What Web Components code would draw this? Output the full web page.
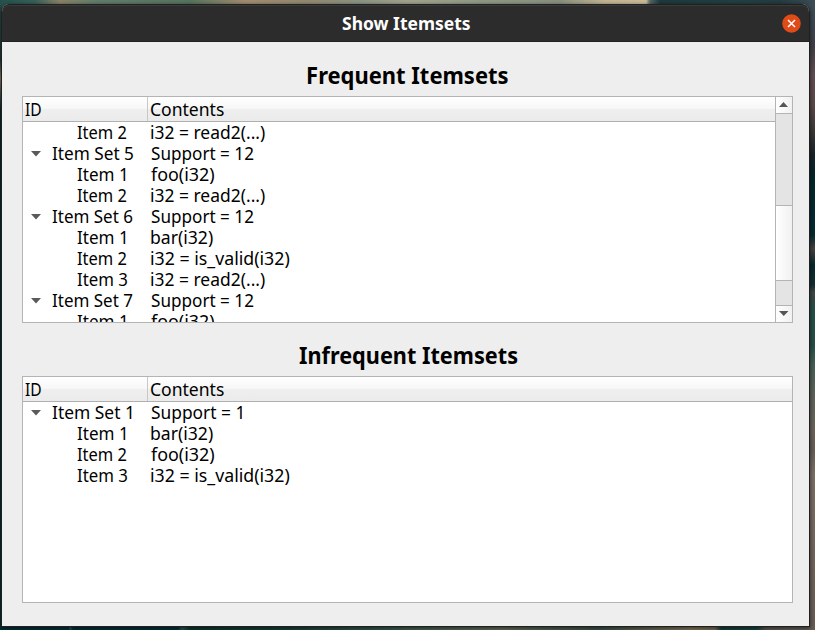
<!DOCTYPE html>
<html lang="en"><head><meta charset="utf-8"><title>Show Itemsets</title>
<style>
html,body{margin:0;width:815px;height:630px;overflow:hidden}
body{font-family:"Noto Sans",sans-serif;color:#000}
</style></head><body>
<desk-top>
<dialog-window>
<item-tree heading="Frequent Itemsets" hw="200" scroll id="f"></item-tree>
<item-tree heading="Infrequent Itemsets" hw="218.5" id="i"></item-tree>
</dialog-window>
</desk-top>
<script>
// Text line fitted to a given ink width.
class FitText extends HTMLElement{
  connectedCallback(){
    const bold=this.hasAttribute('bold'), size=+(this.getAttribute('size')||17.4), w=+this.getAttribute('w');
    const c=document.createElement('canvas').getContext('2d');
    c.font=(bold?'700 ':'400 ')+size+'px "Noto Sans", sans-serif';
    const m=c.measureText(this.textContent);
    const ink=m.actualBoundingBoxRight+m.actualBoundingBoxLeft, s=w/ink;
    const r=this.attachShadow({mode:'open'});
    r.innerHTML=`<style>:host{display:block;width:${w}px;height:21px;white-space:pre;font:${bold?700:400} ${size}px/21px "Noto Sans",sans-serif}
    span{display:block;width:max-content;transform-origin:0 0;transform:translateX(${m.actualBoundingBoxLeft*s}px) scaleX(${s})}</style><span><slot></slot></span>`;
  }
}
customElements.define('fit-text',FitText);

class DeskTop extends HTMLElement{
  constructor(){super();this.attachShadow({mode:'open'}).innerHTML=`<style>
  :host{display:grid;box-sizing:border-box;width:815px;height:630px;padding:4px 5px 3px 1px;background:
   linear-gradient(90deg,#25514d 0,#35605a 35px,#8b8268 60px,#637d6b 95px,#56735f 190px,#a18c70 245px,#928a72 310px,#8b9584 360px,#a3a48f 410px,#8f9a86 480px,#8a9080 560px,#c3b593 605px,#cbbd99 646px,#566866 650px,#1d393d 660px,#223f43 745px,#253b42 780px,#3c4d55 815px) 0 0/815px 5px no-repeat,
   linear-gradient(90deg,#002f35 0,#003238 69px,#2a555a 70px,#002f34 73px,#003238 178px,#2c5350 182px,#08382f 190px,#183f38 290px,#3e5b4e 400px,#5e6857 500px,#3a5147 600px,#7e7259 690px,#716a53 715px,#143f3b 721px,#174540 757px,#5a5550 766px,#665d57 815px) 0 100%/815px 4px no-repeat,
   linear-gradient(#234d4b 0,#1d3d3d 60px,#8b7c62 78px,#3b4f4b 95px,#06292e 110px,#022f35 630px) 0 0/2px 630px no-repeat,
   linear-gradient(#3c4d55 0,#3c4852 20px,#403e48 45px,#614d51 75px,#5c4848 105px,#3e3838 130px,#172329 155px,#04262c 175px,#052b31 235px,#47423f 249px,#06282e 265px,#132f33 285px,#3e4643 292px,#24504a 310px,#274d46 345px,#455f55 365px,#5b6358 395px,#6a6259 430px,#655d54 450px,#7c6e66 475px,#706359 560px,#665b55 630px)}
  </style><slot></slot>`}}
customElements.define('desk-top',DeskTop);

class DialogWindow extends HTMLElement{
  constructor(){super();this.attachShadow({mode:'open'}).innerHTML=`<style>
  :host{display:flex;flex-direction:column;box-sizing:border-box;border:1px solid #202020;border-top:0;border-radius:8px 8px 0 0;background:#eee;overflow:hidden;box-shadow:0 1px 4px #0009}
  header{box-sizing:border-box;flex:none;display:grid;grid-template-columns:1fr auto 1fr;align-items:center;height:38px;padding:2px 9px 0 9px;color:#fff;background:#2c2c2c;border-bottom:1px solid #222;box-shadow:inset 0 1px #202020,inset 0 2px #3b3b3b;border-radius:8px 8px 0 0}
  svg{justify-self:end;display:block;margin-right:-.5px}
  main{display:flex;flex-direction:column;gap:22px;padding:23px 16px 0 20px}
  </style><header><i></i><fit-text bold size="17" w="128">Show Itemsets</fit-text>
  <svg width="19" height="19" viewBox="0 0 19 19"><circle cx="9.5" cy="9.5" r="9.3" fill="#e04b18"/><path d="M6 6l7 7M13 6l-7 7" stroke="#fff" stroke-width="1.5"/></svg></header><main><slot></slot></main>`}}
customElements.define('dialog-window',DialogWindow);

class TreeRow extends HTMLElement{
  connectedCallback(){
    const g=n=>this.getAttribute(n), child=this.hasAttribute('child');
    this.attachShadow({mode:'open'}).innerHTML=`<style>
    :host{display:grid;grid-template-columns:128.3px auto;height:21px}
    div{display:flex;align-items:center;box-sizing:border-box;padding-left:${child?53.5:7.5}px}
    svg{display:block;margin-right:11px}</style>
    <div>${child?'':'<svg width="10" height="21" viewBox="0 0 10 21"><path d="M0 8h10l-5 5.4z" fill="#5a5a5a"/></svg>'}<fit-text w="${g('iw')}">${g('label')}</fit-text></div>
    <fit-text w="${g('cw')}">${g('text')}</fit-text>`;
  }}
customElements.define('tree-row',TreeRow);

class ScrollBar extends HTMLElement{
  constructor(){super();this.attachShadow({mode:'open'}).innerHTML=`<style>
  :host{display:grid;grid-template-rows:16px 93px 74px 26px 16px;box-sizing:border-box;width:17px;border-left:1px solid #b4b4b4;background:#e4e4e4}
  .b,.s{background:linear-gradient(90deg,#fff,#f1f1f1)}
  .s{border:solid #b4b4b4;border-width:1px 0;margin:-1px 0}
  .t{border-top:1px solid #b4b4b4;box-sizing:border-box}
  .e{border-top:1px solid #b4b4b4;margin-top:-1px}
  svg{display:block}</style>
  <div class="b"><svg width="16" height="16"><path d="M3 10L7.5 5 12 10z" fill="#555"/></svg></div><div class="t"></div><div class="s"></div><div></div><div class="b e"><svg width="16" height="16"><path d="M3 5h9.5l-4.75 5z" fill="#555"/></svg></div>`}}
customElements.define('scroll-bar',ScrollBar);

const kinds={r2:['i32 = read2(...)',114],f:['foo(i32)',63.5],b:['bar(i32)',62],v:['i32 = is_valid(i32)',138.5],s12:['Support = 12',103],s1:['Support = 1',91.5]};
const data={f:[[2,'r2'],['S5','s12'],[1,'f'],[2,'r2'],['S6','s12'],[1,'b'],[2,'v'],[3,'r2'],['S7','s12'],[1,'f']],
 i:[['S1','s1'],[1,'b'],[2,'f'],[3,'v']]};
class ItemTree extends HTMLElement{
  connectedCallback(){
    const rows=data[this.id].map(([n,k])=>{
      const set=typeof n==='string', d=set?n.slice(1):n;
      return `<tree-row ${set?'':'child'} label="${set?'Item Set ':'Item '}${d}" iw="${set?(d==='1'?80:81):(d===1?48.8:50)}" text="${kinds[k][0]}" cw="${kinds[k][1]}"></tree-row>`}).join('');
    const sc=this.hasAttribute('scroll');
    this.attachShadow({mode:'open'}).innerHTML=`<style>
    :host{display:grid;grid-template-rows:21px 227px;row-gap:10px}
    h2{margin:0 0 0 1px;justify-self:center;font-size:inherit}
    section{box-sizing:border-box;display:grid;grid-template-columns:1fr auto;border:1px solid #b4b4b4;background:#fff;overflow:hidden}
    .view{min-width:0;height:225px;overflow:hidden}
    .head{box-sizing:border-box;display:grid;grid-template-columns:125px 1fr;height:25px;border-bottom:1px solid #b0b0b0;background:linear-gradient(#fff,#f7f7f7 48%,#efefef 52%,#ebebeb)}
    .head div{box-sizing:border-box;padding:2px 0 0 3px}
    .head div:first-child{border-right:1px solid #c8c8c8;padding-left:2px}
    </style><h2><fit-text bold size="23" w="${this.getAttribute('hw')}">${this.getAttribute('heading')}</fit-text></h2>
    <section><div class="view"><div class="head"><div><fit-text w="16">ID</fit-text></div><div><fit-text w="73">Contents</fit-text></div></div>${rows}</div>${sc?'<scroll-bar></scroll-bar>':''}</section>`;
  }}
customElements.define('item-tree',ItemTree);
</script></body></html>
